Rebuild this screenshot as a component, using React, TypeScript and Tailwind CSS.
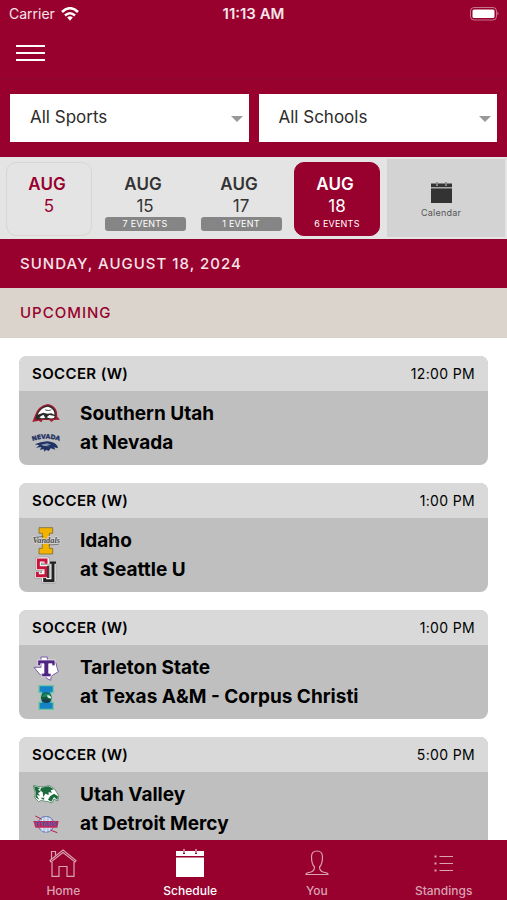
import React, { useState } from 'react';

const days = [
  { id: 'aug-5', month: 'AUG', day: 5, events: '', today: true },
  { id: 'aug-15', month: 'AUG', day: 15, events: '7 EVENTS', today: false },
  { id: 'aug-17', month: 'AUG', day: 17, events: '1 EVENT', today: false },
  { id: 'aug-18', month: 'AUG', day: 18, events: '6 EVENTS', today: false },
];

const logoClass = 'w-7 h-7 flex-none overflow-visible';

const SouthernUtahLogo = () => (
  <svg viewBox="0 0 84 84" className={logoClass} aria-hidden="true">
    <path d="M1 66 L8 48 Q18 16 48 12 Q70 16 75 36 L76 50 L84 59 L66 60 L58 66 L52 60 L32 60 L28 67 L20 62 Z" fill="#a51c30" />
    <path d="M10 57 L13 46 Q22 20 48 16 Q66 20 71 38 L71 55 Q52 60 34 56 L18 59 Z" fill="#2b2b2b" />
    <path d="M17 44 Q27 22 48 20 Q64 24 67 38 L67 44 L58 40 L46 41 L34 38 Z" fill="#fff" />
    <path d="M22 52 L34 44 L40 54 L28 55 Z M44 52 L52 45 L68 48 L66 54 Q54 57 44 52 Z" fill="#fff" />
    <path d="M38 28 L50 30 L60 28 L54 33 L42 33 Z" fill="#6a6f6a" />
  </svg>
);

const NevadaLogo = () => (
  <svg viewBox="0 0 84 84" className={logoClass} aria-hidden="true">
    <defs>
      <path id="nevada-arc" d="M-2 37 Q42 21 86 37" />
    </defs>
    <text fontFamily="DejaVu Sans" fontWeight="bold" fontSize="18" fill="#1f3263" stroke="#1f3263" strokeWidth="1">
      <textPath href="#nevada-arc" startOffset="50%" textAnchor="middle">NEVADA</textPath>
    </text>
    <path d="M8 46 L26 40 L46 37 Q66 38 76 50 L78 58 L66 55 L70 62 L56 58 L50 66 L42 62 L38 68 L34 60 L24 63 L28 54 L12 56 L22 49 Z" fill="#1f3263" />
    <path d="M26 47 L46 43 L58 47 L44 48 L54 52 L36 51 Z" fill="#8c98ad" />
  </svg>
);

const IdahoLogo = () => (
  <svg viewBox="0 0 84 84" className={logoClass} aria-hidden="true">
    <path d="M21 2 H62 V19 H52 V64 H62 V81 H21 V64 H31 V19 H21 Z" fill="#f1b300" stroke="#6b5b2a" strokeWidth="2" />
    <text x="43" y="49" textAnchor="middle" fontFamily="Liberation Serif" fontStyle="italic" fontWeight="bold" fontSize="25" fill="#4a4a4a" stroke="#d8d8d8" strokeWidth="4" paintOrder="stroke">Vandals</text>
    <path d="M8 31 L34 28 M50 54 L80 52" stroke="#5a5a5a" strokeWidth="2" />
  </svg>
);

const SeattleLogo = () => (
  <svg viewBox="0 0 84 84" className={logoClass} aria-hidden="true">
    <g fill="none" strokeLinejoin="round">
      <path d="M44 23 V12 H19 V35 H42 V59 H16 V48 M38 44 V74 H63 V20" stroke="#8a8a8a" strokeWidth="19" />
      <path d="M44 23 V12 H19 V35 H42 V59 H16 V48 M38 44 V74 H63 V20" stroke="#f4f4f4" strokeWidth="16" />
    </g>
    <g fill="none">
      <path d="M63 20 V74 H38 V56" stroke="#222" strokeWidth="9" />
      <path d="M54 20 H72" stroke="#222" strokeWidth="7" />
      <path d="M42 24 V12 H19 V35 H42 V60 H16 V48" stroke="#f4f4f4" strokeWidth="12" />
      <path d="M42 23 V12 H19 V35 H42 V59 H16 V48" stroke="#c8143c" strokeWidth="9" />
      <path d="M48 30 V66" stroke="#222" strokeWidth="5" />
    </g>
  </svg>
);

const TarletonLogo = () => (
  <svg viewBox="0 0 84 84" className={logoClass} aria-hidden="true">
    <path d="M27 9 H46 V22 L72 27 L76 44 L79 53 L58 66 L56 79 L44 73 L36 59 L25 63 L6 40 H27 Z" fill="#fff" stroke="#7b5ca6" strokeWidth="3" />
    <path d="M17 18 H69 V35 H60 V29 H50 V58 H57 V68 H29 V58 H36 V29 H26 V35 H17 Z" fill="#4f2583" stroke="#fff" strokeWidth="2" />
  </svg>
);

const IslandersLogo = () => (
  <svg viewBox="0 0 84 84" className={logoClass} aria-hidden="true">
    <path d="M21 8 H64 V28 H57 V58 H64 V79 H21 V58 H28 V28 H21 Z" fill="#1683c6" stroke="#6cc5a4" strokeWidth="4" />
    <circle cx="43" cy="44" r="16" fill="#14573f" />
    <path d="M28 42 Q38 24 56 34 Q48 44 28 42 Z" fill="#1b8a63" />
    <path d="M46 36 Q56 36 58 46 Q50 47 46 42 Z" fill="#d9efe6" />
    <path d="M29 52 Q42 44 56 54 Q44 65 29 52 Z" fill="#173a56" />
  </svg>
);

const UtahValleyLogo = () => (
  <svg viewBox="0 0 84 84" className={logoClass} aria-hidden="true">
    <path d="M4 14 L30 18 L52 14 L68 24 L80 44 L77 60 L66 54 L60 66 L48 62 L36 60 L28 58 L20 62 L8 50 L10 36 Z" fill="#fff" stroke="#2c6e49" strokeWidth="2" />
    <path d="M6 16 L26 21 L18 25 L26 32 L18 36 L24 44 L14 42 L22 56 L10 49 L12 36 Z" fill="#1c6b3c" />
    <path d="M28 20 L50 16 L66 25 L56 28 L60 36 L50 33 L50 42 L40 38 L34 48 L32 34 L24 28 Z" fill="#1c6b3c" />
    <path d="M54 46 L66 38 L78 46 L76 57 L66 48 L58 62 L48 56 Z M26 50 L38 50 L34 57 Z" fill="#1c6b3c" />
  </svg>
);

const DetroitMercyLogo = () => (
  <svg viewBox="0 0 84 84" className={logoClass} aria-hidden="true">
    <circle cx="42" cy="43" r="24" fill="#b9cbe6" stroke="#6479ad" strokeWidth="3" />
    <path d="M10 18 L30 28 M54 60 L76 68" stroke="#b3204d" strokeWidth="3" fill="none" />
    <path d="M42 20 V68 M30 24 Q38 42 30 64 M54 24 Q46 42 54 64" stroke="#fff" strokeWidth="2" fill="none" />
    <path d="M4 33 L80 33 L76 53 L10 53 Z" fill="#c02a5a" />
    <text x="42" y="49" textAnchor="middle" fontFamily="DejaVu Sans" fontWeight="bold" fontSize="17" fill="#5a56a8">TITANS</text>
  </svg>
);

const games = [
  { sport: 'SOCCER (W)', time: '12:00 PM', away: 'Southern Utah', home: 'at Nevada', awayLogo: <SouthernUtahLogo />, homeLogo: <NevadaLogo /> },
  { sport: 'SOCCER (W)', time: '1:00 PM', away: 'Idaho', home: 'at Seattle U', awayLogo: <IdahoLogo />, homeLogo: <SeattleLogo /> },
  { sport: 'SOCCER (W)', time: '1:00 PM', away: 'Tarleton State', home: 'at Texas A&M - Corpus Christi', awayLogo: <TarletonLogo />, homeLogo: <IslandersLogo /> },
  { sport: 'SOCCER (W)', time: '5:00 PM', away: 'Utah Valley', home: 'at Detroit Mercy', awayLogo: <UtahValleyLogo />, homeLogo: <DetroitMercyLogo /> },
];

const CalendarIcon = ({ className }: { className: string }) => (
  <svg viewBox="0 0 28 28" className={className} fill="currentColor" aria-hidden="true">
    <path d="M0 2 H7 V5 H9 V2 H19 V5 H21 V2 H28 V7 H0 Z" />
    <path d="M7.500 0 H8.500 V4 H7.500 Z M19.500 0 H20.500 V4 H19.500 Z" />
    <path d="M0 8.500 H28 V28 H0 Z" />
  </svg>
);

const HomeIcon = () => (
  <svg viewBox="0 0 28 28" className="w-7 h-7" fill="none" stroke="currentColor" strokeWidth="1.200" aria-hidden="true">
    <path d="M1 11.500 L14 1 L27 11.500 L26 13 L14 3.500 L2 13 Z" />
    <path d="M2.500 10 V2.500 H6.500 V6.500" />
    <path d="M3 13 V27.400 H10 V17.500 H18 V27.400 H25 V13" />
  </svg>
);

const PersonIcon = () => (
  <svg viewBox="0 0 28 28" className="w-7 h-7" fill="none" stroke="currentColor" strokeWidth="1.200" aria-hidden="true">
    <path d="M11.500 18 C9.500 16 8.500 13 8.500 8 C8.500 4 10.500 2 14 2 C17.500 2 19.500 4 19.500 8 C19.500 13 18.500 16 16.500 18 C16.500 21 17.500 22 20 23 L24 24 Q25 24.500 25 25.500 H3 Q3 24.500 4 24 L8 23 C10.500 22 11.500 21 11.500 18 Z" />
  </svg>
);

const StandingsIcon = () => (
  <svg viewBox="0 0 28 28" className="w-7 h-7" fill="none" stroke="currentColor" strokeWidth="1.200" aria-hidden="true">
    <path d="M9.500 7.500 H23 M9.500 14.500 H23 M9.500 21.500 H23" />
    <path d="M4.500 7.500 H6.500 M4.500 14.500 H6.500 M4.500 21.500 H6.500" strokeWidth="2" />
  </svg>
);

const tabs = [
  { label: 'Home', icon: <HomeIcon /> },
  { label: 'Schedule', icon: <CalendarIcon className="w-7 h-7" /> },
  { label: 'You', icon: <PersonIcon /> },
  { label: 'Standings', icon: <StandingsIcon /> },
];

const StatusBar = () => (
  <div className="grid grid-cols-3 items-center h-7 px-2 text-sm text-white/90">
    <div className="flex items-center gap-1.5 pl-px">
      Carrier
      <svg viewBox="0 0 18 14" className="w-[18px] h-3.5" fill="none" stroke="#fff" strokeWidth="2.600" aria-hidden="true">
        <path d="M1 5 Q9 -2.500 17 5" />
        <path d="M4 8.500 Q9 4 14 8.500" />
        <path d="M6.200 10.400 Q9 8.200 11.800 10.400 L9 13.800 Z" fill="#fff" stroke="none" />
      </svg>
    </div>
    <div className="text-center text-[15px] font-semibold">11:13 AM</div>
    <svg viewBox="0 0 30 14" className="w-[30px] h-3.5 justify-self-end" aria-hidden="true">
      <rect x="1.500" y="0.500" width="26" height="12.500" rx="3.500" fill="none" stroke="#fff" strokeOpacity="0.450" />
      <rect x="3.500" y="2.500" width="22" height="8.500" rx="1.500" fill="#fff" />
      <path d="M28.500 4.500 Q30.500 6.500 28.500 8.500 Z" fill="#fff" fillOpacity="0.500" />
    </svg>
  </div>
);

const FilterSelect = ({ label, option }: { label: string; option: string }) => (
  <div className="relative flex-1">
    <select aria-label={label} className="w-full h-12 appearance-none bg-white pl-5 pr-8 text-[17px] text-[#2b2b2b]">
      <option>{option}</option>
    </select>
    <svg viewBox="0 0 12 6" className="absolute right-1.5 top-[22px] w-3 h-1.5 pointer-events-none" aria-hidden="true">
      <path d="M0 0 H12 L6 6 Z" fill="#999" />
    </svg>
  </div>
);

const GameCard = ({ game }: { game: (typeof games)[number] }) => (
  <article className="rounded-lg overflow-hidden bg-[#bfbfbf] text-black">
    <div className="flex items-center justify-between h-[35px] bg-[#d9d9d9] px-[13px]">
      <h3 className="text-[15px] leading-5 font-semibold tracking-wide">{game.sport}</h3>
      <span className="text-sm leading-5 tracking-wide">{game.time}</span>
    </div>
    <div className="px-[13px] pt-2 pb-2 text-[19px] leading-[29px] font-bold">
      <div className="flex items-center gap-5 h-[29px]">
        {game.awayLogo}
        <p>{game.away}</p>
      </div>
      <div className="flex items-center gap-5 h-[29px]">
        {game.homeLogo}
        <p>{game.home}</p>
      </div>
    </div>
  </article>
);

const App = () => {
  const [selectedDay, setSelectedDay] = useState('aug-18');
  const [activeTab, setActiveTab] = useState('Schedule');

  const dayClass = (id: string, today: boolean) => {
    if (id === selectedDay) return 'bg-[#98002e] border-[#98002e] text-white';
    if (today) return 'border-[#d8d5d2] text-[#98002e]';
    return 'border-transparent text-[#333]';
  };

  return (
    <div className="flex flex-col h-screen bg-white font-['Inter',sans-serif]">
      <header className="flex-none bg-[#98002e]">
        <StatusBar />
        <div className="flex items-center h-[50px] px-4">
          <button type="button" aria-label="Menu" className="flex flex-col gap-[5px]">
            <span className="w-[29px] h-0.5 bg-white" />
            <span className="w-[29px] h-0.5 bg-white" />
            <span className="w-[29px] h-0.5 bg-white" />
          </button>
        </div>
        <div className="flex gap-2.5 border-t border-[#8a0a30] px-2.5 pt-[15px] pb-[15px]">
          <FilterSelect label="Sport" option="All Sports" />
          <FilterSelect label="School" option="All Schools" />
        </div>
      </header>

      <div className="flex flex-none bg-[#e4e4e4] h-[82px] pl-1.5 pr-0.5 gap-[7px]">
        <div className="flex flex-1 gap-2.5 pt-[5px] pb-[3px]">
          {days.map((d) => (
            <button
              key={d.id}
              type="button"
              onClick={() => setSelectedDay(d.id)}
              className={`flex-1 flex flex-col items-center rounded-[10px] border pt-[11px] ${dayClass(d.id, d.today)}`}
            >
              <span className="pr-1 text-[17px] leading-[21px] font-semibold">{d.month}</span>
              <span className="text-[17px] leading-[22px]">{d.day}</span>
              {d.events && (
                <span className={`w-[81px] rounded-[3px] text-[9px] leading-[14px] tracking-wide text-white ${d.id === selectedDay ? '' : 'bg-[#858585]'}`}>
                  {d.events}
                </span>
              )}
            </button>
          ))}
        </div>
        <button type="button" className="flex flex-none w-[118px] flex-col items-center justify-center gap-1 my-0.5 pt-1 pr-2.5 bg-[#d3d3d3] text-[#333]">
          <CalendarIcon className="w-[21px] h-[21px]" />
          <span className="text-[9px] leading-3 tracking-wide text-[#555]">Calendar</span>
        </button>
      </div>

      <main className="flex-1 min-h-0 overflow-y-auto [scrollbar-width:none]">
        <h1 className="h-[49px] leading-[50px] px-5 bg-[#98002e] text-[15px] font-medium tracking-[1px] text-white/90">
          SUNDAY, AUGUST 18, 2024
        </h1>
        <h2 className="h-[50px] leading-[50px] px-5 bg-[#dad4cd] text-[15px] font-medium tracking-[1px] text-[#98002e]">
          UPCOMING
        </h2>
        <div className="flex flex-col gap-[18px] px-[19px] py-[18px]">
          {games.map((game) => (
            <GameCard key={game.away} game={game} />
          ))}
        </div>
      </main>

      <nav className="flex flex-none h-[60px] bg-[#98002e]">
        {tabs.map((tab) => (
          <button
            key={tab.label}
            type="button"
            onClick={() => setActiveTab(tab.label)}
            className={`flex-1 flex flex-col items-center pt-[9px] gap-1.5 text-xs font-medium ${tab.label === activeTab ? 'text-white' : 'text-[#d9a3b4]'}`}
          >
            {tab.icon}
            {tab.label}
          </button>
        ))}
      </nav>
    </div>
  );
};

export default App;
